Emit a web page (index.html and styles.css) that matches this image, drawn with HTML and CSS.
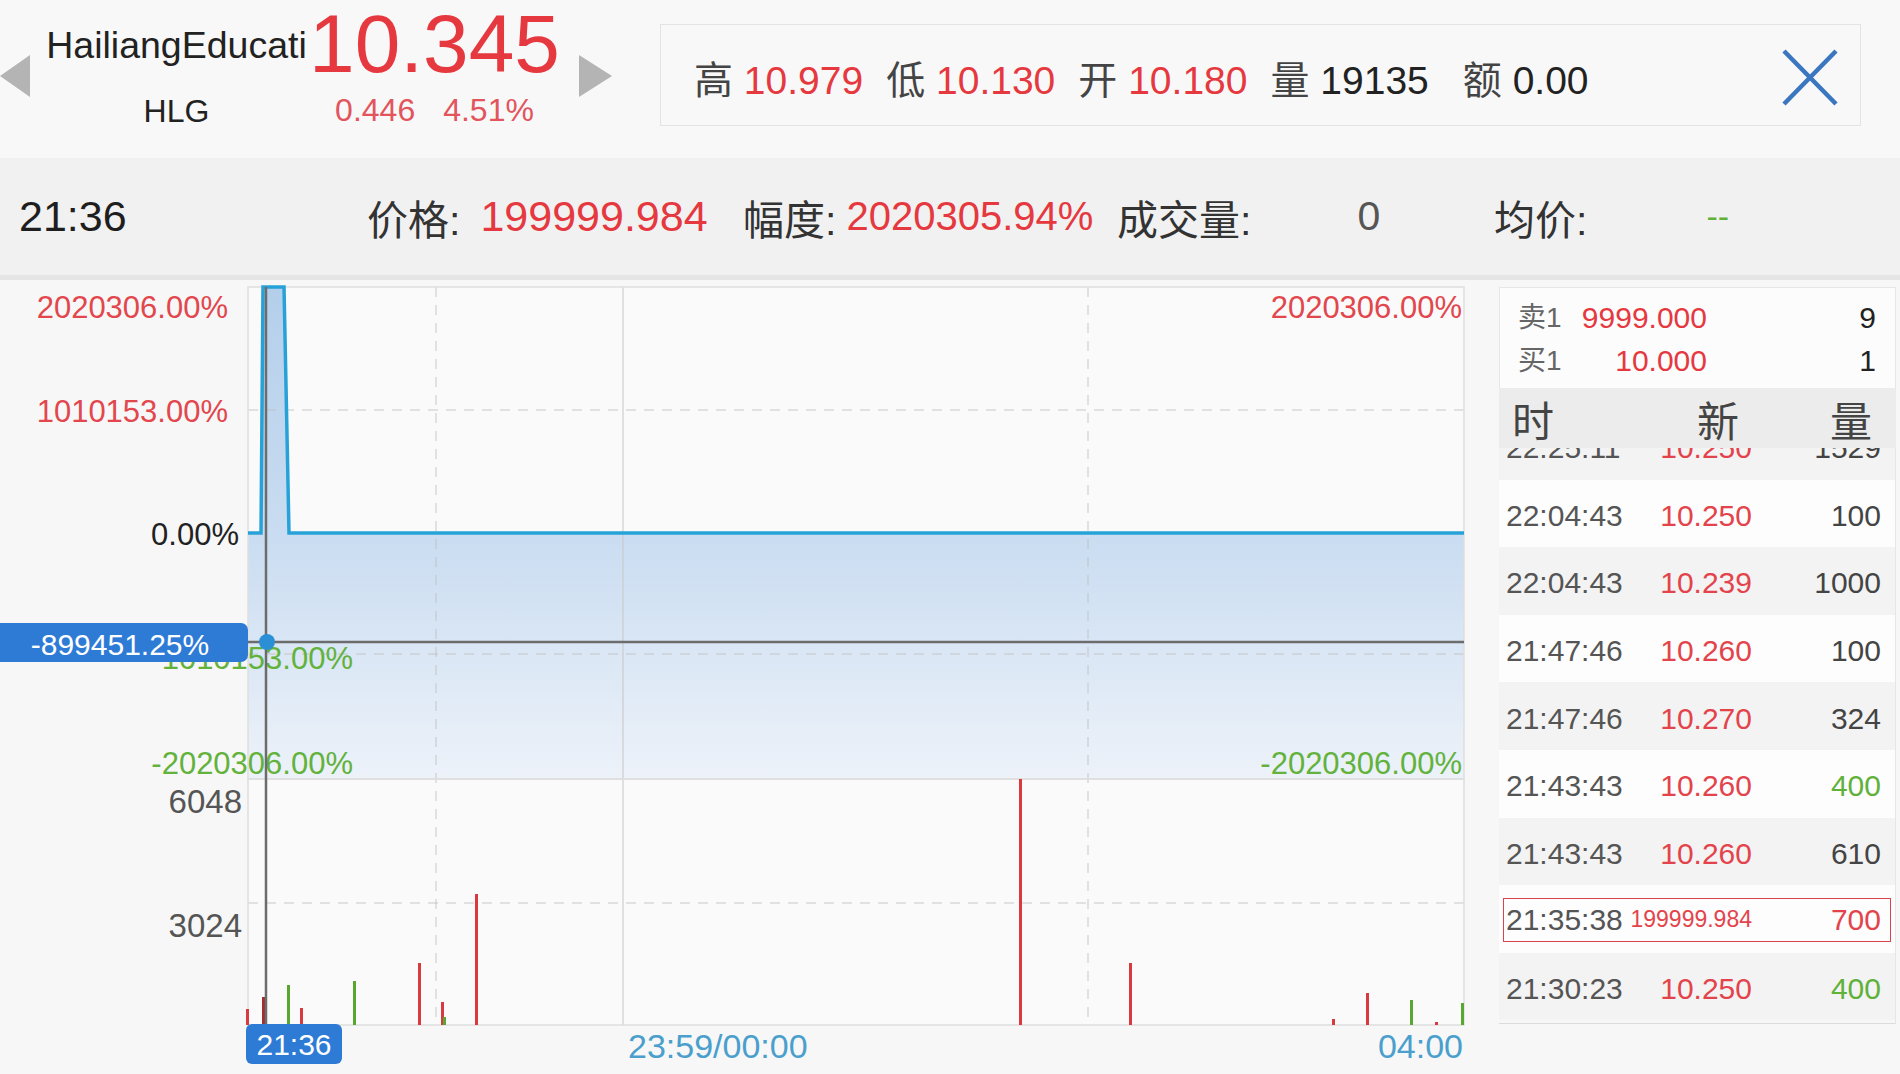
FILE: index.html
```html
<!DOCTYPE html>
<html lang="zh-CN">
<head>
<meta charset="utf-8">
<title>HLG 分时</title>
<link rel="stylesheet" href="styles.css">
</head>
<body>
<div class="page">
  <header class="top">
    <span class="arrow arrow-left"></span>
    <div class="name">
      <div class="name-full">HailiangEducati</div>
      <div class="name-code">HLG</div>
    </div>
    <div class="quote">
      <div class="quote-price">10.345</div>
      <div class="quote-change"><span>0.446</span><span>4.51%</span></div>
    </div>
    <span class="arrow arrow-right"></span>
    <div class="stats">
      <div class="stats-items">
        <span class="stat"><span class="lbl">高</span> <span class="up">10.979</span></span>
        <span class="stat"><span class="lbl">低</span> <span class="up">10.130</span></span>
        <span class="stat"><span class="lbl">开</span> <span class="up">10.180</span></span>
        <span class="stat stat-vol"><span class="lbl">量</span> <span>19135</span></span>
        <span class="stat stat-amt"><span class="lbl">额</span> <span>0.00</span></span>
      </div>
      <svg class="close" viewBox="0 0 58 59" width="58" height="59"><path class="close-x" d="M3 3 L55 56 M55 3 L3 56"/></svg>
    </div>
  </header>

  <div class="bar">
    <span class="b-time">21:36</span>
    <span class="b-item"><span>价格:</span><span class="up v1">199999.984</span></span>
    <span class="b-item"><span>幅度:</span><span class="up v2">2020305.94%</span></span>
    <span class="b-item"><span>成交量:</span><span class="v3">0</span></span>
    <span class="b-item"><span>均价:</span><span class="down v4">--</span></span>
  </div>

  <main class="chart-area">
    <svg class="chart" width="1499" height="794" viewBox="0 0 1499 794">
      <defs>
        <linearGradient id="areaFill" x1="0" y1="7" x2="0" y2="499" gradientUnits="userSpaceOnUse">
          <stop offset="0" stop-color="#b4cfeb"/>
          <stop offset="0.5" stop-color="#c9dcf1"/>
          <stop offset="1" stop-color="#edf2f9"/>
        </linearGradient>
      </defs>
      <rect class="plot-bg" x="248" y="7" width="1216" height="738"/>
      <path class="area" d="M248,253 L261,253 L263,7 L284,7 L289,253 L1464,253 L1464,499 L248,499 Z"/>

      <line class="grid-dash" x1="248" y1="130" x2="1464" y2="130"/>
      <line class="grid-dash" x1="248" y1="374" x2="1464" y2="374"/>
      <line class="grid-dash" x1="248" y1="623" x2="1464" y2="623"/>
      <line class="grid-dash" x1="436" y1="7" x2="436" y2="745"/>
      <line class="grid-dash" x1="1088" y1="7" x2="1088" y2="745"/>
      <line class="grid" x1="623" y1="7" x2="623" y2="745"/>
      <rect class="frame" x="248" y="7" width="1216" height="492"/>
      <rect class="frame" x="248" y="499" width="1216" height="246"/>

      <path class="price-line" d="M248,253 L261,253 L263,7 L284,7 L289,253 L1464,253"/>

      <rect class="bar-up" x="246" y="729" width="3" height="16"/>
      <rect class="bar-dark" x="262" y="717" width="3" height="28"/>
      <rect class="bar-down" x="287" y="705" width="3" height="40"/>
      <rect class="bar-up" x="300" y="728" width="3" height="17"/>
      <rect class="bar-down" x="353" y="701" width="3" height="44"/>
      <rect class="bar-up" x="418" y="683" width="3" height="62"/>
      <rect class="bar-up" x="441" y="722" width="3" height="23"/>
      <rect class="bar-down" x="443" y="737" width="3" height="8"/>
      <rect class="bar-up" x="475" y="614" width="3" height="131"/>
      <rect class="bar-up" x="1019" y="499" width="3" height="246"/>
      <rect class="bar-up" x="1129" y="683" width="3" height="62"/>
      <rect class="bar-up" x="1332" y="739" width="3" height="6"/>
      <rect class="bar-up" x="1366" y="713" width="3" height="32"/>
      <rect class="bar-down" x="1410" y="720" width="3" height="25"/>
      <rect class="bar-up" x="1435" y="742" width="3" height="3"/>
      <rect class="bar-down" x="1461" y="723" width="3" height="22"/>

      <text class="ax ax-up" x="228" y="38">2020306.00%</text>
      <text class="ax ax-up" x="228" y="142">1010153.00%</text>
      <text class="ax ax-zero" x="239" y="265">0.00%</text>
      <text class="ax ax-down" x="353" y="389">-1010153.00%</text>
      <text class="ax ax-down" x="353" y="494">-2020306.00%</text>
      <text class="ax ax-up" x="1462" y="38">2020306.00%</text>
      <text class="ax ax-down" x="1462" y="494">-2020306.00%</text>
      <text class="ax ax-vol" x="242" y="533">6048</text>
      <text class="ax ax-vol" x="242" y="657">3024</text>

      <line class="cross" x1="266" y1="7" x2="266" y2="745"/>
      <line class="cross" x1="248" y1="362" x2="1464" y2="362"/>
      <circle class="cross-dot" cx="267" cy="362" r="8"/>

      <rect class="tag" x="-10" y="343" width="258" height="39" rx="7"/>
      <text class="tag-text" x="120" y="375">-899451.25%</text>

      <rect class="tag" x="246" y="744" width="96" height="40" rx="6"/>
      <text class="tag-text" x="294" y="775">21:36</text>
      <text class="ax-time" x="628" y="778">23:59/00:00</text>
      <text class="ax-time ax-time-end" x="1463" y="778">04:00</text>
    </svg>

    <aside class="panel">
      <div class="book">
        <div class="book-row"><span class="book-lbl">卖1</span><span class="book-price up">9999.000</span><span class="book-qty">9</span></div>
        <div class="book-row"><span class="book-lbl">买1</span><span class="book-price up">10.000</span><span class="book-qty">1</span></div>
      </div>
      <div class="trade-head"><span>时</span><span>新</span><span class="th-right">量</span></div>
      <div class="trades">
        <div class="trades-list">
          <div class="trade"><div class="trade-in"><span class="t-time">22:25:11</span><span class="t-price">10.250</span><span class="t-vol">1529</span></div></div>
          <div class="trade"><div class="trade-in"><span class="t-time">22:04:43</span><span class="t-price">10.250</span><span class="t-vol">100</span></div></div>
          <div class="trade"><div class="trade-in"><span class="t-time">22:04:43</span><span class="t-price">10.239</span><span class="t-vol">1000</span></div></div>
          <div class="trade"><div class="trade-in"><span class="t-time">21:47:46</span><span class="t-price">10.260</span><span class="t-vol">100</span></div></div>
          <div class="trade"><div class="trade-in"><span class="t-time">21:47:46</span><span class="t-price">10.270</span><span class="t-vol">324</span></div></div>
          <div class="trade"><div class="trade-in"><span class="t-time">21:43:43</span><span class="t-price">10.260</span><span class="t-vol down">400</span></div></div>
          <div class="trade"><div class="trade-in"><span class="t-time">21:43:43</span><span class="t-price">10.260</span><span class="t-vol">610</span></div></div>
          <div class="trade"><div class="trade-in hl"><span class="t-time">21:35:38</span><span class="t-price t-small">199999.984</span><span class="t-vol up">700</span></div></div>
          <div class="trade"><div class="trade-in"><span class="t-time">21:30:23</span><span class="t-price">10.250</span><span class="t-vol down">400</span></div></div>
        </div>
      </div>
    </aside>
  </main>
</div>
</body>
</html>
```

FILE: styles.css
```css
html, body {
  margin: 0;
  padding: 0;
}
body {
  background: #f7f7f7;
  font-family: "Liberation Sans", "Noto Sans CJK SC", sans-serif;
  color: #222;
}
.page {
  width: 1900px;
  height: 1074px;
  overflow: hidden;
}
.up { color: #e5383f; }
.down { color: #5fb13a; }

/* ---------- top header ---------- */
.top {
  display: flex;
  align-items: flex-start;
  height: 158px;
  background: #f8f8f8;
}
.arrow {
  width: 0;
  height: 0;
  border-top: 21px solid transparent;
  border-bottom: 21px solid transparent;
  margin-top: 55px;
}
.arrow-left { border-right: 30px solid #b4b4b4; }
.arrow-right { border-left: 33px solid #b4b4b4; margin-left: 19px; }

.name {
  width: 265px;
  margin-left: 14px;
  padding-top: 25px;
  text-align: center;
  overflow: hidden;
  color: #222;
}
.name-full {
  font-size: 37.5px;
  line-height: 40px;
  white-space: nowrap;
}
.name-code {
  font-size: 32px;
  line-height: 40px;
  margin-top: 26px;
}
.quote {
  width: 251px;
  padding-top: 3px;
  text-align: center;
}
.quote-price {
  font-size: 82px;
  line-height: 82px;
  color: #e5383f;
  white-space: nowrap;
}
.quote-change {
  display: flex;
  justify-content: center;
  gap: 28px;
  font-size: 32px;
  line-height: 40px;
  margin-top: 5px;
  color: #e2555d;
}
.stats {
  box-sizing: border-box;
  width: 1201px;
  height: 102px;
  margin-left: 48px;
  margin-top: 24px;
  border: 1px solid #e3e3e3;
  background: #f8f8f8;
  display: flex;
  align-items: center;
  justify-content: space-between;
  padding: 4px 21px 0 33px;
}
.stats-items {
  display: flex;
  font-size: 39px;
  color: #222;
  white-space: nowrap;
}
.stat + .stat { margin-left: 23px; }
.stat-vol { margin-left: 25px; }
.stat.stat-amt { margin-left: 34px; }
.lbl { color: #444; }
.close { display: block; }
.close-x {
  stroke: #3b77c0;
  stroke-width: 4.5;
  fill: none;
}

/* ---------- info bar ---------- */
.bar {
  height: 117px;
  box-sizing: content-box;
  background: #f1f1f1;
  border-bottom: 5px solid #e5e5e5;
  display: grid;
  grid-template-columns: 348px 376px 374px 377px 1fr;
  padding-left: 19px;
  align-items: center;
  font-size: 41px;
  color: #333;
  white-space: nowrap;
}
.b-time { color: #1e1e1e; font-size: 43px; }
.b-item { display: flex; align-items: center; }
.v1 { margin-left: 20px; font-size: 43px; }
.v2 { margin-left: 10px; font-size: 40px; }
.v3 { margin-left: 106px; color: #555; }
.v4 { margin-left: 119px; font-size: 34px; }

/* ---------- chart ---------- */
.chart-area {
  display: flex;
  align-items: flex-start;
  height: 794px;
}
.chart { display: block; flex: none; }
.plot-bg { fill: #fafafa; }
.area { fill: url(#areaFill); }
.grid-dash {
  stroke: rgba(190, 190, 190, 0.55);
  stroke-width: 1.5;
  stroke-dasharray: 10 8;
}
.grid { stroke: rgba(200, 200, 200, 0.7); stroke-width: 1.5; }
.frame { fill: none; stroke: #dedede; stroke-width: 1.5; }
.price-line {
  fill: none;
  stroke: #27a2d8;
  stroke-width: 3.5;
  stroke-linejoin: miter;
}
.bar-up { fill: #d93a40; }
.bar-dark { fill: #9e3034; }
.bar-down { fill: #58a731; }

.ax {
  font-family: "Liberation Sans", sans-serif;
  font-size: 31px;
  text-anchor: end;
}
.ax-up { fill: #e2474d; }
.ax-down { fill: #62b23c; }
.ax-zero { fill: #222; }
.ax-vol { fill: #555; font-size: 33px; }
.ax-time {
  font-family: "Liberation Sans", sans-serif;
  font-size: 34px;
  fill: #4a9fcd;
}
.ax-time-end { text-anchor: end; }

.cross { stroke: #6c6c6c; stroke-width: 2.5; }
.cross-dot { fill: #2b8fd5; }
.tag { fill: #2e7bd6; }
.tag-text {
  font-family: "Liberation Sans", sans-serif;
  font-size: 30px;
  fill: #ffffff;
  text-anchor: middle;
}

/* ---------- right panel ---------- */
.panel {
  width: 397px;
  margin-top: 7px;
  display: flex;
  flex-direction: column;
  flex: none;
}
.book {
  box-sizing: border-box;
  height: 101px;
  background: #fcfcfc;
  border: 1px solid #e6e6e6;
  border-bottom: none;
  padding: 8px 19px 0 18px;
  font-size: 30px;
}
.book-row {
  display: grid;
  grid-template-columns: 60px 129px 1fr;
  line-height: 43px;
}
.book-lbl { color: #666; font-size: 28px; }
.book-price { text-align: right; }
.book-qty { text-align: right; color: #222; }

.trade-head {
  height: 60px;
  background: #ececec;
  display: grid;
  grid-template-columns: 185px 42px 1fr;
  align-items: center;
  padding: 0 24px 0 13px;
  font-size: 42px;
  color: #444;
}
.th-right { justify-self: end; }

.trades {
  height: 575px;
  overflow: hidden;
  border-bottom: 1px solid #dcdcdc;
  border-right: 1px solid #e6e6e6;
}
.trades-list { margin-top: -36px; }
.trade {
  height: 67.6px;
  display: flex;
  align-items: center;
  background: #fdfdfd;
}
.trade:nth-child(odd) { background: #f3f3f3; }
.trade-in {
  box-sizing: border-box;
  width: 100%;
  height: 44px;
  margin-top: 5px;
  display: grid;
  grid-template-columns: 120px 126px 1fr;
  align-items: center;
  padding: 0 14px 0 7px;
  font-size: 30px;
  white-space: nowrap;
}
.trade-in.hl {
  width: auto;
  flex: 1;
  margin: 2px 4px 0 4px;
  padding: 0 9px 0 2px;
  border: 1px solid #d8434c;
}
.t-time { color: #555; }
.t-price { color: #e3444c; text-align: right; }
.t-small { font-size: 23px; }
.t-vol { color: #444; text-align: right; }
.t-vol.up { color: #e3444c; }
.t-vol.down { color: #5fb13a; }
```
